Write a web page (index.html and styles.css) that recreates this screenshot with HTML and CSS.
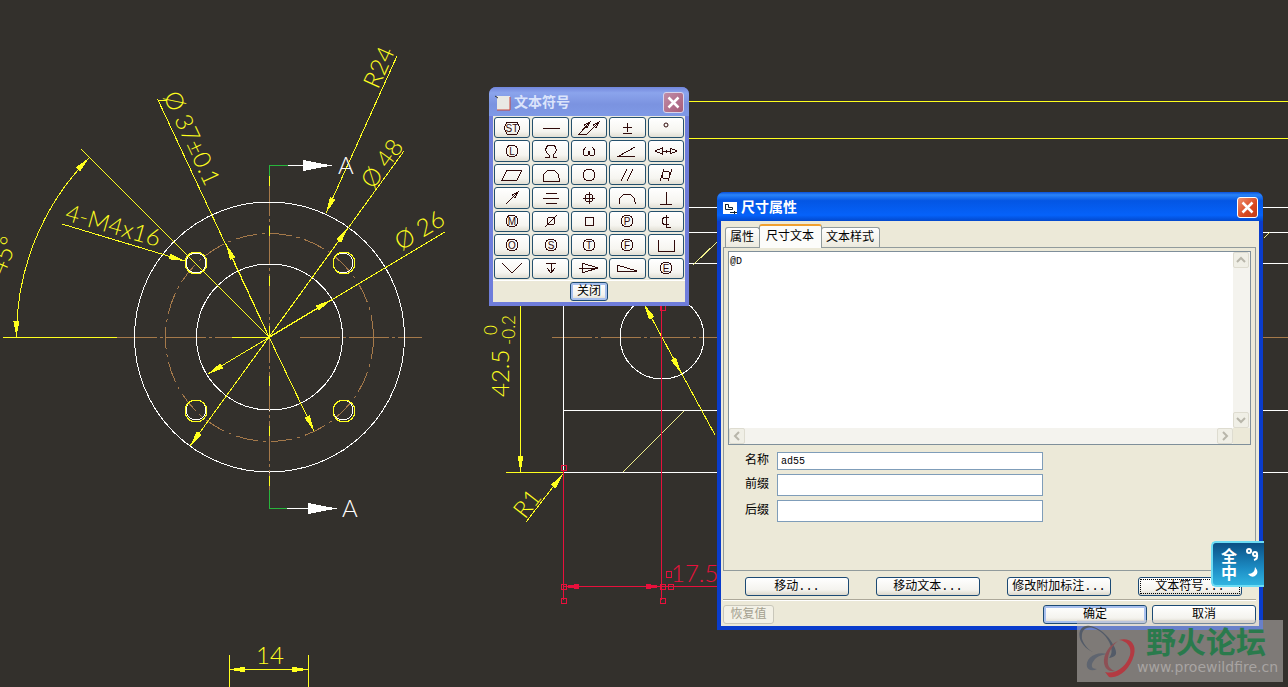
FILE: index.html
```html
<!DOCTYPE html>
<html lang="zh-CN">

<head>
  <meta charset="UTF-8" />
  <meta name="viewport" content="width=device-width, initial-scale=1.0" />
  <title>尺寸属性</title>
  <link rel="stylesheet" href="styles.css">
</head>

<body>
  <main class="desktop">
    <svg class="drawing" viewBox="0 0 1288 687" preserveAspectRatio="xMinYMin slice">
      <defs>
        <marker id="arrow" viewBox="0 0 16 6" refX="16" refY="3" markerWidth="16" markerHeight="6" markerUnits="userSpaceOnUse" orient="auto-start-reverse">
          <path d="M0 0L16 3L0 6Z" fill="#ffff1e" />
        </marker>
        <marker id="arrow-red" viewBox="0 0 16 6" refX="16" refY="3" markerWidth="16" markerHeight="6" markerUnits="userSpaceOnUse" orient="auto-start-reverse">
          <path d="M0 0L16 3L0 6Z" fill="#e8103c" />
        </marker>
      </defs>

      <!-- center lines -->
      <g class="center">
        <path d="M117 337.5H232M300 337.5H422" />
        <path d="M552 337.5H717M1263 337.5H1288" />
        <path d="M269.5 176V500" />
        <circle class="dashed" cx="269.5" cy="337.5" r="104" />
      </g>

      <!-- flange -->
      <g class="edge">
        <circle cx="269.5" cy="337" r="135" />
        <circle cx="269.5" cy="337" r="73" />
        <circle cx="196" cy="263" r="10" />
        <circle cx="343" cy="263" r="10" />
        <circle cx="196" cy="410" r="10" />
        <circle cx="343" cy="410" r="10" />
      </g>
      <g class="dim">
        <circle cx="196" cy="263" r="11" />
        <circle cx="344" cy="263" r="11" />
        <circle cx="196" cy="411" r="11" />
        <circle cx="344" cy="411" r="11" />
      </g>

      <!-- section marks -->
      <path class="cut" d="M288 165.5H269.5V176M288 508.5H269.5V490" />
      <path class="edge" d="M288 165.5H304M287 508.5H309" />
      <path class="solid" d="M303 160L332 165.5L303 171ZM308 503L337 508.5L308 514Z" />

      <!-- side view -->
      <g class="edge">
        <path d="M563.5 300V472.5M563 472.5H717M563 410.5H717" />
        <path d="M689 207.5H717M689 232.5H717M689 263.5H717" />
        <path d="M1263 207.5H1288M1263 232.5H1288M1263 263.5H1288M1263 410.5H1288M1263 472.5H1288" />
        <circle cx="662" cy="337" r="42" />
      </g>
      <path class="hatch" d="M623 472L684 411M693 265L717 242M1264 238L1270 232" />

      <!-- dimensions -->
      <g class="dim">
        <path d="M689 101.5H1288M689 138.5H1288" />
        <path d="M3 337.5H117M232 337.5H269" />
        <path class="ticks" d="M269.5 176V500" />
        <path d="M81 149L269 337" />
        <path class="both" d="M89 158A253 253 0 0 0 16.5 337" />
        <path class="end" d="M62 224L185 261" />
        <path d="M167 101L158 100L269 337" />
        <path class="end" d="M269 337L226 244" />
        <path class="end" d="M269 337L314 431" />
        <path class="end" d="M397 56L326 213" />
        <path class="end" d="M404 151L190 446" />
        <path class="end" d="M269 337L348 228" />
        <path class="end" d="M445 232L208 374" />
        <path class="end" d="M269 337L331 300" />
        <path class="end" d="M520.5 300V472" />
        <path d="M506 472.5H563" />
        <path class="end" d="M526 522L563 474" />
        <path class="start" d="M644 304L715 435" />
        <path class="end" d="M662 337L681 373" />
        <path class="both" d="M229 669.5H308" />
        <path d="M229.5 655V687M308.5 655V687" />
      </g>

      <!-- selected dimension -->
      <g class="picked">
        <path d="M563.5 470V600M661.5 305V600M662 586.5H717" />
        <path class="both" d="M563 586.5H662" />
        <path d="M561 465h5v5h-5zM660 305h5v5h-5zM561 584h5v5h-5zM660 584h5v5h-5zM668 584h5v5h-5zM561 598h5v5h-5zM660 598h5v5h-5zM666 571h5v6h-5z" />
      </g>

      <g class="note">
        <text transform="translate(378 90) rotate(-66)">R24</text>
        <text transform="translate(373 190) rotate(-54)"><tspan class="dia">Ø</tspan> 48</text>
        <text transform="translate(401 251) rotate(-31)"><tspan class="dia">Ø</tspan> 26</text>
        <text transform="translate(163 96) rotate(65)"><tspan class="dia">Ø</tspan> 37±0.1</text>
        <text transform="translate(64 220) rotate(16)">4-M4x16</text>
        <text transform="translate(4 276) rotate(-68)">45°</text>
        <text transform="translate(509 397) rotate(-90)">42.5</text>
        <text class="tol" transform="translate(497 335) rotate(-90)">0</text>
        <text class="tol" transform="translate(515 345) rotate(-90)">-0.2</text>
        <text transform="translate(525 520) rotate(-52)">R1</text>
        <text x="256" y="664">14</text>
        <text class="note-red" x="671" y="582">17.5</text>
        <text class="note-white" x="338" y="174">A</text>
        <text class="note-white" x="342" y="517">A</text>
      </g>
    </svg>

    <!-- symbol palette -->
    <section class="window palette">
      <header class="titlebar">
        <svg class="app-icon" viewBox="0 0 16 16">
          <path d="M2 1H15V15H2Z" fill="#e9e9e4" />
          <path d="M15 2V15H2" fill="none" stroke="#c8463c" />
          <path d="M0 1L3 3" stroke="#333" />
        </svg>
        <h2>文本符号</h2>
        <button class="close" aria-label="关闭窗口"><svg viewBox="0 0 12 12"><path d="M2 2L10 10M10 2L2 10" /></svg></button>
      </header>
      <div class="symbols">
        <button aria-label="ST"><svg viewBox="-18 -10 36 20"><path d="M-8 0L-5 -6H5L8 0L5 6H-5Z" /><text y="4">ST</text></svg></button>
        <button aria-label="直线度"><svg viewBox="-18 -10 36 20"><path d="M-8 0H9" /></svg></button>
        <button aria-label="全跳动"><svg viewBox="-18 -10 36 20"><path d="M1 -6L-10 6H-2L10 -6M1 -6L-5 -3L-2 0ZM10 -6L4 -3L7 0Z" /></svg></button>
        <button aria-label="正负"><svg viewBox="-18 -10 36 20"><path d="M-4 -1H5M0 -5V4M-4 5H5" /></svg></button>
        <button aria-label="度"><svg class="smooth" viewBox="-18 -10 36 20"><circle cy="-3" r="2" /></svg></button>

        <button aria-label="L"><svg viewBox="-18 -10 36 20"><circle r="6" /><text y="4">L</text></svg></button>
        <button aria-label="欧姆"><svg viewBox="-18 -10 36 20"><path d="M-6 6H-2V4C-7 1 -6 -6 0 -6S7 1 2 4V6H6" /></svg></button>
        <button aria-label="角速度"><svg viewBox="-18 -10 36 20"><path d="M-3 -4C-7 -1 -6 5 -3 5C-1 5 0 3 0 0C0 3 1 5 3 5C6 5 7 -1 3 -4" /></svg></button>
        <button aria-label="倾斜度"><svg viewBox="-18 -10 36 20"><path d="M8 -4L-8 5H8" /></svg></button>
        <button aria-label="之间"><svg viewBox="-18 -10 36 20"><path d="M-11 0L-4 -3V3ZM-4 0H4M11 0L4 -3V3ZM0 -1V2" /></svg></button>

        <button aria-label="平面度"><svg viewBox="-18 -10 36 20"><path d="M-10 5L-5 -5H10L5 5Z" /></svg></button>
        <button aria-label="面轮廓度"><svg viewBox="-18 -10 36 20"><path d="M-8 6V3A8 8 0 0 1 8 3V6Z" /></svg></button>
        <button aria-label="圆度"><svg viewBox="-18 -10 36 20"><circle r="6" /></svg></button>
        <button aria-label="平行度"><svg viewBox="-18 -10 36 20"><path d="M-6 6L0 -6M0 6L6 -6" /></svg></button>
        <button aria-label="圆柱度"><svg viewBox="-18 -10 36 20"><circle r="4" /><path d="M-6 6L-2 -6M2 6L6 -6" /></svg></button>

        <button aria-label="圆跳动"><svg viewBox="-18 -10 36 20"><path d="M-6 6L6 -6M6 -6L0 -3L3 0Z" /></svg></button>
        <button aria-label="对称度"><svg viewBox="-18 -10 36 20"><path d="M-5 -5H6M-8 0H8M-5 5H6" /></svg></button>
        <button aria-label="位置度"><svg viewBox="-18 -10 36 20"><circle r="4" /><path d="M-6 0H6M0 -6V6" /></svg></button>
        <button aria-label="线轮廓度"><svg viewBox="-18 -10 36 20"><path d="M-8 6V4A8 8 0 0 1 8 4V6" /></svg></button>
        <button aria-label="垂直度"><svg viewBox="-18 -10 36 20"><path d="M0 -6V6M-6 6H6" /></svg></button>

        <button aria-label="M"><svg viewBox="-18 -10 36 20"><circle r="6" /><text y="4">M</text></svg></button>
        <button aria-label="直径"><svg viewBox="-18 -10 36 20"><circle r="4" /><path d="M-6 6L6 -6" /></svg></button>
        <button aria-label="方形"><svg viewBox="-18 -10 36 20"><path d="M-4 -4H4V4H-4Z" /></svg></button>
        <button aria-label="P"><svg viewBox="-18 -10 36 20"><circle r="6" /><text y="4">P</text></svg></button>
        <button aria-label="中心线"><svg viewBox="-18 -10 36 20"><path d="M3 -3C-1 -5 -4 -3 -4 0S-1 5 3 3M0 -6V6H5" /></svg></button>

        <button aria-label="O"><svg viewBox="-18 -10 36 20"><circle r="6" /><text y="4">O</text></svg></button>
        <button aria-label="S"><svg viewBox="-18 -10 36 20"><circle r="6" /><text y="4">S</text></svg></button>
        <button aria-label="T"><svg viewBox="-18 -10 36 20"><circle r="6" /><text y="4">T</text></svg></button>
        <button aria-label="F"><svg viewBox="-18 -10 36 20"><circle r="6" /><text y="4">F</text></svg></button>
        <button aria-label="沉孔"><svg viewBox="-18 -10 36 20"><path d="M-8 -5V6H8V-5" /></svg></button>

        <button aria-label="埋头孔"><svg viewBox="-18 -10 36 20"><path d="M-10 -5L0 5L10 -5" /></svg></button>
        <button aria-label="深度"><svg viewBox="-18 -10 36 20"><path d="M-5 -5H5M0 -5V5M-4 0L0 5L4 0" /></svg></button>
        <button aria-label="锥度"><svg viewBox="-18 -10 36 20"><path d="M-7 -5V5L9 0ZM-10 0H9" /></svg></button>
        <button aria-label="斜度"><svg viewBox="-18 -10 36 20"><path d="M-10 3V-3L10 3Z" /></svg></button>
        <button aria-label="E"><svg viewBox="-18 -10 36 20"><circle r="6" /><text y="4">E</text></svg></button>
      </div>
      <footer class="palette-foot">
        <button class="btn default">关闭</button>
      </footer>
    </section>

    <!-- dimension properties -->
    <section class="window dialog">
      <header class="titlebar">
        <svg class="app-icon" viewBox="0 0 16 16">
          <path d="M1 2H15V14H1Z" fill="#fff" />
          <path d="M3.5 4V9.5H10.5V7.5H6.5V4.5H3M8 12.5H15M12.5 11V14" fill="none" stroke="#123" />
        </svg>
        <h2>尺寸属性</h2>
        <button class="close" aria-label="关闭窗口"><svg viewBox="0 0 12 12"><path d="M2 2L10 10M10 2L2 10" /></svg></button>
      </header>
      <div class="dialog-body">
        <nav class="tabs">
          <button class="tab">属性</button>
          <button class="tab active">尺寸文本</button>
          <button class="tab">文本样式</button>
        </nav>
        <div class="page">
          <div class="editor">
            <textarea aria-label="尺寸文本" wrap="off">@D</textarea>
            <div class="bar vertical">
              <button aria-label="向上"><svg viewBox="0 0 10 10"><path d="M1 7L5 3L9 7" /></svg></button>
              <button aria-label="向下"><svg viewBox="0 0 10 10"><path d="M1 3L5 7L9 3" /></svg></button>
            </div>
            <div class="bar">
              <button aria-label="向左"><svg viewBox="0 0 10 10"><path d="M7 1L3 5L7 9" /></svg></button>
              <button aria-label="向右"><svg viewBox="0 0 10 10"><path d="M3 1L7 5L3 9" /></svg></button>
            </div>
          </div>
          <div class="fields">
            <label for="name">名称</label>
            <input class="short" type="text" id="name" value="ad55" />
            <label for="prefix">前缀</label>
            <input type="text" id="prefix" />
            <label for="suffix">后缀</label>
            <input type="text" id="suffix" />
          </div>
        </div>
        <div class="actions">
          <button class="btn">移动...</button>
          <button class="btn">移动文本...</button>
          <button class="btn">修改附加标注...</button>
          <button class="btn focused">文本符号...</button>
        </div>
        <footer class="dialog-foot">
          <button class="btn restore" disabled>恢复值</button>
          <button class="btn default">确定</button>
          <button class="btn">取消</button>
        </footer>
      </div>
    </section>

    <!-- input method badge -->
    <aside class="ime">
      <span>全</span>
      <svg viewBox="0 0 16 16"><circle cx="4" cy="4" r="2" /><circle cx="10" cy="7" r="2" /><path d="M12 7Q13 12 9 13" /></svg>
      <span>中</span>
      <svg viewBox="0 0 16 16"><path class="moon" d="M10 3Q15 9 10 12Q6 14 3 10Q10 10 10 3Z" /></svg>
    </aside>

    <div class="watermark">
      <svg viewBox="0 0 60 56">
        <path d="M4 6C10 -2 26 6 34 18C42 30 40 34 32 35C40 26 28 8 16 5C8 3 4 8 5 16C7 22 12 28 18 30C6 26 -1 14 4 6Z" fill="#535b68" />
        <path d="M42 17C52 14 60 20 57 32C53 46 42 56 32 54L28 49C40 52 50 42 53 32C55 24 50 18 42 17Z" fill="#b33a42" />
        <path d="M30 31C18 28 8 36 10 44C12 48 16 48 20 46C14 46 13 42 18 36C22 32 26 32 30 31Z" fill="#5f6570" />
        <path d="M41 18C32 22 26 32 27 40C28 46 32 49 38 48C32 46 30 42 31 35C32 28 36 22 41 18Z" fill="#8d5055" />
      </svg>
      <div class="brand">
        <strong>野火论坛</strong>
        <span>www.proewildfire.cn</span>
      </div>
    </div>
  </main>
</body>

</html>
```
FILE: styles.css
```css
* {
  box-sizing: border-box;
}

body {
  margin: 0;
  background: #33302c;
  color: #000;
  font-family: "Liberation Mono", "Noto Sans CJK SC", monospace;
  font-size: 12px;
  overflow: hidden;
}

button,
input,
textarea {
  font: inherit;
  color: inherit;
  margin: 0;
}

.desktop {
  position: relative;
  min-height: 100vh;
}

/* drawing */
.drawing {
  display: block;
  width: 100%;
  height: 100vh;
  fill: none;
  shape-rendering: crispEdges;
}

.edge {
  stroke: #fff;
}

.center {
  stroke: #a5794a;
  stroke-dasharray: 40 3 3 3;
}

.dashed {
  stroke-dasharray: 22 5 3 5;
}

.cut {
  stroke: #28b43c;
}

.solid {
  fill: #fff;
}

.hatch {
  stroke: #f0f08c;
}

.dim {
  stroke: #ffff1e;
}

.ticks {
  stroke-dasharray: 10 40;
}

.dim .end,
.dim .both {
  marker-end: url(#arrow);
}

.dim .start,
.dim .both {
  marker-start: url(#arrow);
}

.picked {
  stroke: #e8103c;
}

.picked .both {
  marker-start: url(#arrow-red);
  marker-end: url(#arrow-red);
}

.note {
  fill: #ffff1e;
  font-family: "Lato", sans-serif;
  font-size: 24px;
  font-weight: 300;
}

.note .tol {
  font-size: 17px;
}

.note .note-red {
  fill: #e8103c;
}

.note .note-white {
  fill: #fff;
}

/* windows */
.window {
  position: absolute;
  display: flex;
  flex-direction: column;
  border-radius: 7px 7px 0 0;
}

.titlebar {
  display: flex;
  align-items: center;
  gap: 3px;
  height: 29px;
}

.titlebar h2 {
  flex: 1;
  margin: 0;
  font-size: 14px;
  line-height: 20px;
  color: #fff;
}

.app-icon {
  width: 16px;
  height: 16px;
}

.close {
  display: grid;
  place-items: center;
  width: 21px;
  height: 21px;
  padding: 0;
  border: 1px solid #fff;
  border-radius: 3px;
  background: linear-gradient(135deg, #f09070, #d84820 60%, #c03c18);
}

.close svg {
  width: 15px;
  height: 15px;
  stroke: #fff;
  stroke-width: 2;
}

.btn {
  height: 19px;
  padding: 0;
  border: 1px solid #1c4a74;
  border-radius: 3px;
  background: linear-gradient(#fff, #f4f3ee 70%, #dcd8cc);
  line-height: 16px;
}

.btn.default {
  box-shadow: inset 0 0 0 2px #a8c0ee;
}

.btn.focused {
  outline: 1px dotted #000;
  outline-offset: -3px;
}

.btn:disabled {
  border-color: #c9c7ba;
  background: #f3f1e6;
  color: #a3a08f;
}

/* symbol palette */
.palette {
  left: 489px;
  top: 87px;
  width: 200px;
  padding: 0 4px 4px;
  background: #6f7ddb;
}

.palette .titlebar {
  margin: 0 -4px;
  padding: 2px 5px 0 6px;
  border-radius: 7px 7px 0 0;
  background: linear-gradient(#7286dc, #8ba4ec 20%, #7b93e0 60%, #7f99e6);
}

.palette h2 {
  color: #dbe4fb;
}

.palette .close {
  border-color: #d8d4ec;
  background: linear-gradient(135deg, #c08ca8, #a85c78);
}

.symbols {
  display: grid;
  grid-template-columns: repeat(5, 1fr);
  grid-template-rows: repeat(7, 1fr);
  gap: 2px;
  height: 164px;
  padding: 1px;
  background: #eceade;
}

.symbols button {
  display: grid;
  place-items: center;
  min-width: 0;
  min-height: 0;
  padding: 0;
  border: 1px solid #24506c;
  border-radius: 3px;
  background: linear-gradient(#fff, #f6f5f0 70%, #e2dfd4);
}

.symbols svg {
  width: 36px;
  height: 20px;
  margin: -1px;
  fill: none;
  stroke: #300a0a;
  shape-rendering: crispEdges;
}

.symbols .smooth {
  shape-rendering: auto;
}

.symbols text {
  fill: #300a0a;
  stroke: none;
  font-family: "Liberation Sans", sans-serif;
  font-size: 10px;
  text-anchor: middle;
}

.palette-foot {
  display: flex;
  justify-content: center;
  padding: 1px 0;
  border-top: 1px solid #fff;
  background: #ece9d8;
}

.palette-foot .btn {
  width: 38px;
}

/* dimension properties */
.dialog {
  left: 717px;
  top: 192px;
  width: 546px;
  padding: 0 4px 4px;
  background: #0a3ccc;
}

.dialog .titlebar {
  margin: 0 -4px;
  padding: 2px 5px 0;
  border-radius: 7px 7px 0 0;
  background: linear-gradient(#0a50d8, #2a84f8 10%, #0456e4 30%, #0562fa 80%, #0348cc);
}

.dialog-body {
  padding: 3px 3px 2px 2px;
  background: #ece9d8;
}

.tabs {
  display: flex;
  align-items: flex-end;
  padding-left: 2px;
  height: 23px;
}

.tab {
  height: 20px;
  padding: 0 5px 0 4px;
  border: 1px solid #919b9c;
  border-bottom: 0;
  border-radius: 3px 3px 0 0;
  background: linear-gradient(#fff, #eceade);
  line-height: 18px;
}

.tab.active {
  height: 24px;
  margin: 0 -1px -1px;
  padding: 0 7px 0 6px;
  border-top: 2px solid #f0a030;
  background: #fcfcfa;
}

.page {
  height: 324px;
  padding: 3px 4px;
  border: 1px solid #919b9c;
}

.editor {
  display: grid;
  grid-template-columns: 1fr 17px;
  grid-template-rows: 1fr 16px;
  height: 194px;
  border: 1px solid #7f8f9a;
}

.editor textarea {
  padding: 4px 1px;
  border: 0;
  outline: 0;
  resize: none;
  overflow: hidden;
  background: #fff;
  font-size: 10px;
  line-height: 12px;
}

.bar {
  display: flex;
  justify-content: space-between;
  background: #f4f3ee;
}

.bar.vertical {
  flex-direction: column;
}

.bar button {
  display: grid;
  place-items: center;
  width: 16px;
  height: 16px;
  padding: 0;
  border: 1px solid #dedcd0;
  border-radius: 2px;
  background: #f0efe6;
}

.bar svg {
  width: 10px;
  height: 10px;
  fill: none;
  stroke: #b8b6aa;
  stroke-width: 2;
}

.fields {
  display: grid;
  grid-template-columns: 24px 266px;
  column-gap: 8px;
  row-gap: 4px;
  align-items: center;
  padding: 7px 0 0 17px;
}

.fields label {
  line-height: 16px;
}

.fields input {
  height: 22px;
  padding: 0 3px;
  border: 1px solid #7f9db9;
  background: #fff;
  font-size: 10px;
}

.fields input.short {
  height: 18px;
}

.actions {
  display: flex;
  justify-content: space-between;
  padding: 6px 14px 3px 22px;
  border-bottom: 1px solid #aca899;
}

.actions .btn,
.dialog-foot .btn {
  width: 104px;
}

.dialog-foot {
  display: flex;
  gap: 5px;
  padding-top: 4px;
  border-top: 1px solid #fff;
}

.dialog-foot .restore {
  width: 51px;
  margin-right: auto;
}

/* input method badge */
.ime {
  position: absolute;
  left: 1211px;
  top: 541px;
  display: grid;
  grid-template-columns: 18px 16px;
  column-gap: 6px;
  align-content: center;
  justify-content: end;
  width: 53px;
  height: 46px;
  padding-right: 3px;
  border: 2px solid #6cdcf4;
  border-right: 0;
  border-radius: 5px 0 0 5px;
  background: linear-gradient(#0b4f84, #1c8cc4 60%, #30b4e0);
  color: #fff;
}

.ime span {
  font-family: "Noto Sans CJK SC", sans-serif;
  font-size: 16px;
  font-weight: bold;
  line-height: 17px;
}

.ime svg {
  width: 16px;
  height: 16px;
  fill: none;
  stroke: #fff;
  stroke-width: 2;
}

.ime .moon {
  fill: #fff;
  stroke: none;
}

.watermark {
  position: absolute;
  left: 1077px;
  top: 620px;
  display: flex;
  width: 206px;
  height: 62px;
  padding-top: 3px;
  background: rgba(208, 203, 200, 0.48);
}

.watermark svg {
  width: 60px;
  height: 56px;
}

.brand {
  display: flex;
  flex-direction: column;
  font-family: "Noto Sans CJK SC", sans-serif;
}

.brand strong {
  padding-left: 9px;
  color: #2a7a4c;
  font-size: 30px;
  line-height: 34px;
}

.brand span {
  color: #a8a4a2;
  font-family: "DejaVu Sans", sans-serif;
  font-size: 14px;
  line-height: 20px;
}
```
